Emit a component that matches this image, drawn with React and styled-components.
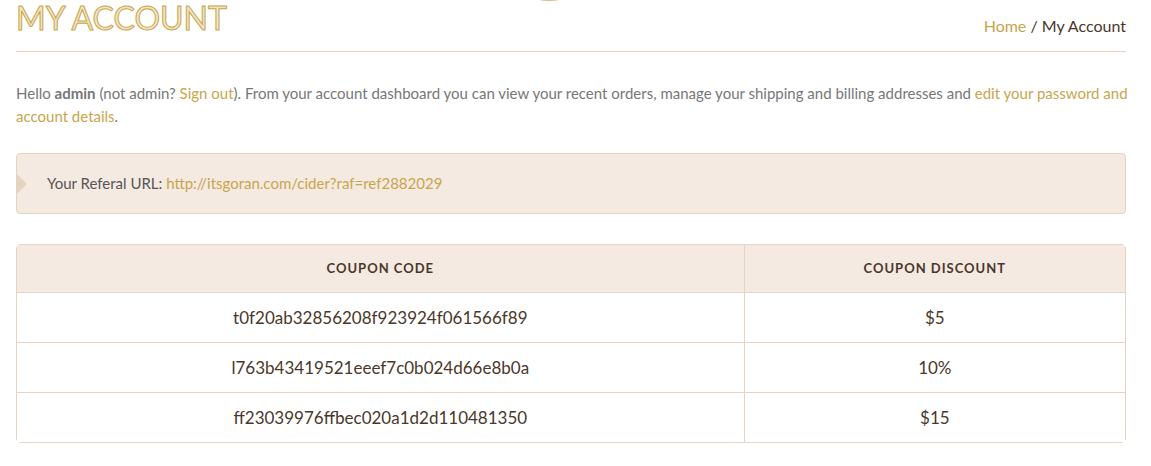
import React from "react";
import styled, { createGlobalStyle } from "styled-components";

const gold = "#c9a54c";
const brown = "#4a372a";
const line = "#e6d4c3";
const blush = "#f5eae1";

const GlobalStyle = createGlobalStyle`
  body {
    margin: 0;
    background: #fff;
    color: #777;
    font: 15px/23px Lato, sans-serif;
  }
`;

const Page = styled.div`
  position: relative;
  padding: 0 25px 24px 16px;
`;

const LogoEdge = styled.svg`
  position: absolute;
  top: 0;
  left: calc(50% - 38px);
  width: 22px;
  height: 2px;
`;

const Header = styled.header`
  display: flex;
  justify-content: space-between;
  align-items: flex-end;
  height: 51px;
  border-bottom: 1px solid ${line};
`;

const Title = styled.h1`
  margin: 0 0 15px;
  font-size: 32px;
  line-height: 36px;
  font-weight: 400;
  text-transform: uppercase;
  color: #f1e5c3;
  -webkit-text-stroke: 1px ${gold};
`;

const Breadcrumb = styled.nav`
  margin-bottom: 13px;
  font-size: 16px;
  line-height: 24px;
  color: ${brown};
`;

const Link = styled.a`
  color: ${gold};
  text-decoration: none;
`;

const Intro = styled.p`
  margin: 30px -16px 25px 0;
`;

const Notice = styled.div`
  position: relative;
  margin-bottom: 30px;
  padding: 18px 30px;
  border: 1px solid ${line};
  border-radius: 4px;
  background: ${blush};
  color: #555;

  &::before {
    content: "";
    position: absolute;
    left: 0;
    top: 50%;
    margin-top: -10px;
    border: 10px solid transparent;
    border-left-color: ${line};
    border-right-width: 0;
  }
`;

const TableFrame = styled.div`
  overflow: hidden;
  border-radius: 5px;
`;

const CouponTable = styled.table`
  width: 100%;
  table-layout: fixed;
  border-collapse: collapse;
  text-align: center;
  color: ${brown};
`;

const HeadCell = styled.th`
  width: ${(p) => p.$width};
  height: 47px;
  padding: 0;
  border: 1px solid ${line};
  background: ${blush};
  font-size: 13px;
  letter-spacing: 1px;
  text-transform: uppercase;
`;

const Cell = styled.td`
  height: 49px;
  padding: 0;
  border: 1px solid ${line};
  font-size: 17px;
`;

const coupons = [
  ["t0f20ab32856208f923924f061566f89", "$5"],
  ["l763b43419521eeef7c0b024d66e8b0a", "10%"],
  ["ff23039976ffbec020a1d2d110481350", "$15"],
];

export default function App() {
  return (
    <Page>
      <GlobalStyle />
      <LogoEdge viewBox="0 0 22 2" aria-hidden="true">
        <ellipse cx="11" cy="-6" rx="20" ry="7" fill="#d9bd83" />
      </LogoEdge>
      <Header>
        <Title>My Account</Title>
        <Breadcrumb aria-label="Breadcrumb">
          <Link href="#home">Home</Link> / My Account
        </Breadcrumb>
      </Header>
      <main>
        <Intro>
          Hello <strong>admin</strong> (not admin? <Link href="#sign-out">Sign out</Link>). From your
          account dashboard you can view your recent orders, manage your shipping and billing
          addresses and <Link href="#edit-account">edit your password and account details</Link>.
        </Intro>
        <Notice>
          Your Referal URL:{" "}
          <Link href="http://itsgoran.com/cider?raf=ref2882029">
            http://itsgoran.com/cider?raf=ref2882029
          </Link>
        </Notice>
        <TableFrame>
          <CouponTable>
            <thead>
              <tr>
                <HeadCell scope="col" $width="auto">Coupon code</HeadCell>
                <HeadCell scope="col" $width="34.3%">Coupon discount</HeadCell>
              </tr>
            </thead>
            <tbody>
              {coupons.map(([code, discount]) => (
                <tr key={code}>
                  <Cell>{code}</Cell>
                  <Cell>{discount}</Cell>
                </tr>
              ))}
            </tbody>
          </CouponTable>
        </TableFrame>
      </main>
    </Page>
  );
}
